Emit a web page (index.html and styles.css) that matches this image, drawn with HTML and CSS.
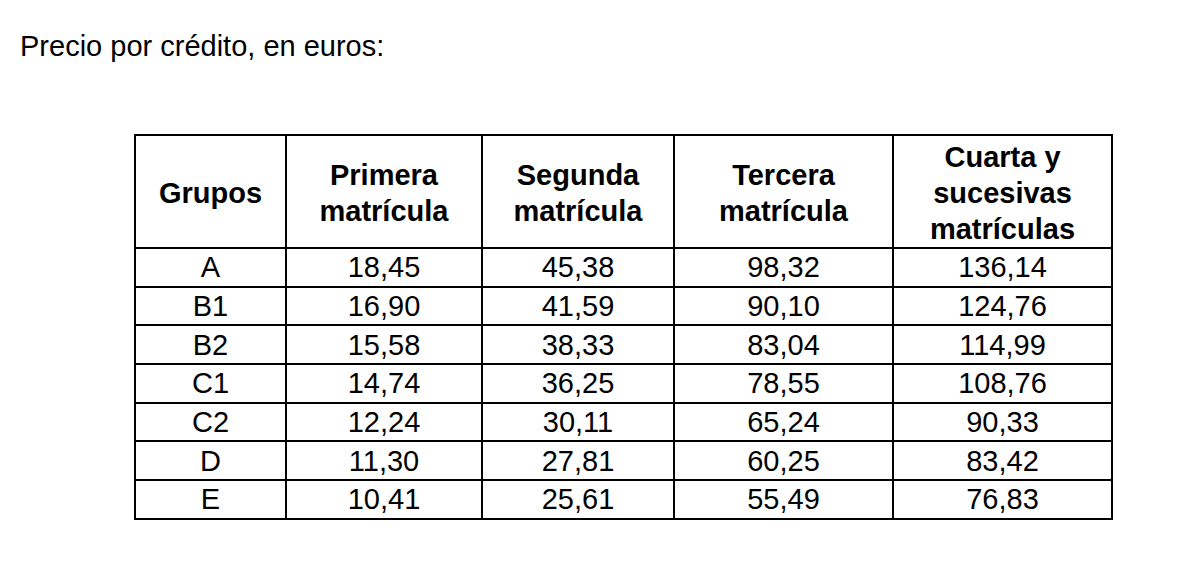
FILE: index.html
```html
<!DOCTYPE html>
<html lang="es">
<head>
<meta charset="utf-8">
<title>Precio por crédito</title>
<link rel="stylesheet" href="styles.css">
</head>
<body>
<p class="title">Precio por crédito, en euros:</p>
<table class="prices">
  <colgroup>
    <col class="c1"><col class="c2"><col class="c3"><col class="c4"><col class="c5">
  </colgroup>
  <thead>
    <tr>
      <th>Grupos</th>
      <th>Primera<br>matrícula</th>
      <th>Segunda<br>matrícula</th>
      <th>Tercera<br>matrícula</th>
      <th>Cuarta y<br>sucesivas<br>matrículas</th>
    </tr>
  </thead>
  <tbody>
    <tr><td>A</td><td>18,45</td><td>45,38</td><td>98,32</td><td>136,14</td></tr>
    <tr><td>B1</td><td>16,90</td><td>41,59</td><td>90,10</td><td>124,76</td></tr>
    <tr><td>B2</td><td>15,58</td><td>38,33</td><td>83,04</td><td>114,99</td></tr>
    <tr><td>C1</td><td>14,74</td><td>36,25</td><td>78,55</td><td>108,76</td></tr>
    <tr><td>C2</td><td>12,24</td><td>30,11</td><td>65,24</td><td>90,33</td></tr>
    <tr><td>D</td><td>11,30</td><td>27,81</td><td>60,25</td><td>83,42</td></tr>
    <tr><td>E</td><td>10,41</td><td>25,61</td><td>55,49</td><td>76,83</td></tr>
  </tbody>
</table>
</body>
</html>
```
FILE: styles.css
```css
html, body {
  margin: 0;
  padding: 0;
  background: #fff;
}
body {
  font-family: "Liberation Sans", Arial, sans-serif;
  color: #000;
  padding: 29px 0 0 20px;
}
.title {
  margin: 0;
  font-size: 29px;
  line-height: 34px;
}
.prices {
  margin: 71px 0 0 114px;
  border-collapse: collapse;
  table-layout: fixed;
  width: 979px;
  font-size: 29px;
}
.c1 { width: 151px; }
.c2 { width: 196px; }
.c3 { width: 192px; }
.c4 { width: 219px; }
.c5 { width: 219px; }
.prices th,
.prices td {
  border: 2px solid #000;
  text-align: center;
  vertical-align: middle;
  padding: 0;
}
.prices th {
  font-weight: bold;
  line-height: 36px;
  height: 108px;
  padding-top: 3px;
}
.prices td {
  line-height: 36px;
  height: 36.7px;
}
```
